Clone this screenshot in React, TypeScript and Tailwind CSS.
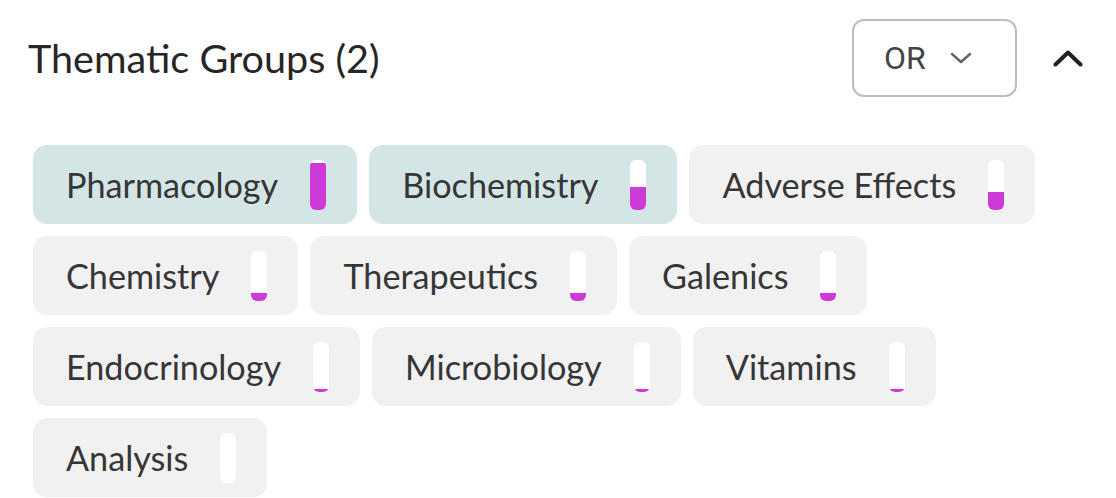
import { FC } from 'react';

type Group = { name: string; level: number; selected?: boolean };

const groups: Group[] = [
  { name: 'Pharmacology', level: 94, selected: true },
  { name: 'Biochemistry', level: 45, selected: true },
  { name: 'Adverse Effects', level: 35 },
  { name: 'Chemistry', level: 15 },
  { name: 'Therapeutics', level: 15 },
  { name: 'Galenics', level: 15 },
  { name: 'Endocrinology', level: 5 },
  { name: 'Microbiology', level: 5 },
  { name: 'Vitamins', level: 5 },
  { name: 'Analysis', level: 0 },
];

const LevelBar: FC<{ level: number }> = ({ level }) => (
  <div className="relative flex h-[50px] w-4 flex-col justify-end overflow-hidden rounded-[6px] bg-white">
    <div className="w-full bg-[#cc3bd8]" style={{ height: `${level}%` }} />
  </div>
);

const Chip: FC<{ group: Group }> = ({ group }) => (
  <button
    className={
      'flex h-[79px] items-center gap-8 rounded-[14px] pl-[33px] pr-[31px] text-[34.2px] text-[#363636] ' +
      (group.selected ? 'bg-[#d4e5e5]' : 'bg-[#f1f1f1]')
    }
  >
    <span>{group.name}</span>
    <LevelBar level={group.level} />
  </button>
);

export default function App() {
  return (
    <div className="h-[498px] w-[1116px] overflow-hidden bg-white font-['Lato',sans-serif]">
      <div className="flex items-center justify-between pl-[28px] pr-[33px] pt-[19px]">
        <h2 className="text-[39.6px] text-[#262626]">Thematic Groups (2)</h2>
        <div className="flex items-center gap-9">
          <button className="flex h-[78px] w-[165px] items-center rounded-[12px] border-2 border-[#bdbdbd] pl-[30px] font-['Roboto',sans-serif] text-[32px] text-[#444]">
            <span>OR</span>
            <svg className="ml-6" width="22" height="12" viewBox="0 0 22 12" fill="none">
              <path d="M2 2 L11 10 L20 2" stroke="#666" strokeWidth="2.5" strokeLinecap="round" strokeLinejoin="round" />
            </svg>
          </button>
          <svg width="30" height="17" viewBox="0 0 30 17" fill="none">
            <path d="M2.5 14.5 L15 2.5 L27.5 14.5" stroke="#222" strokeWidth="4" strokeLinecap="round" strokeLinejoin="round" />
          </svg>
        </div>
      </div>
      <div className="mt-12 flex flex-wrap gap-3 pl-[33px] pr-[60px]">
        {groups.map((g) => (
          <Chip key={g.name} group={g} />
        ))}
      </div>
    </div>
  );
}
